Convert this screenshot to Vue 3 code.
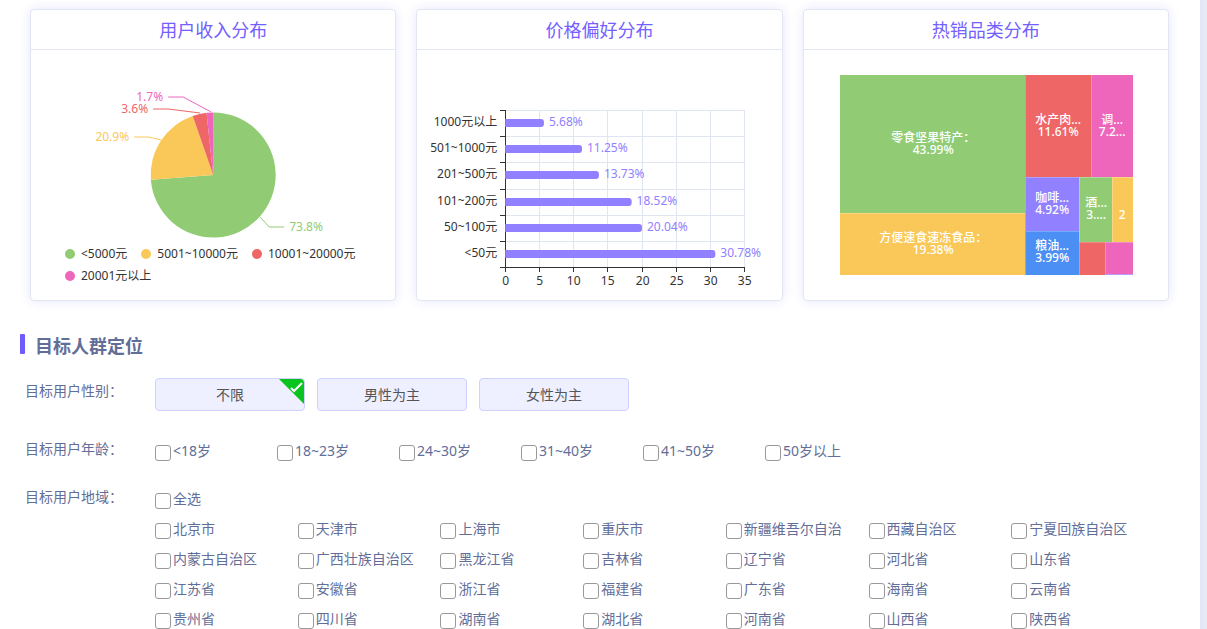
<script setup>
import { ref, computed } from 'vue'

// 用户收入分布
const incomeData = [
  { name: '<5000元', value: 73.8, color: '#91cc75', line: '229,167 238,177 253,177', x: 258, y: 181, anchor: 'start' },
  { name: '5001~10000元', value: 20.9, color: '#fac858', line: '103,87 118,87 130,90', x: 98, y: 91, anchor: 'end' },
  { name: '10001~20000元', value: 3.6, color: '#ee6666', line: '122,59 137,59 169,63', x: 117, y: 63, anchor: 'end' },
  { name: '20001元以上', value: 1.7, color: '#ee66bb', line: '137,47 152,47 180,62', x: 132, y: 51, anchor: 'end' }
]

const slices = computed(() => {
  const cx = 182
  const cy = 125
  const r = 62.5
  let start = 0
  return incomeData.map((item) => {
    const end = start + (item.value / 100) * Math.PI * 2
    const x1 = cx + r * Math.sin(start)
    const y1 = cy - r * Math.cos(start)
    const x2 = cx + r * Math.sin(end)
    const y2 = cy - r * Math.cos(end)
    const large = end - start > Math.PI ? 1 : 0
    start = end
    return {
      ...item,
      d: `M${cx},${cy} L${x1},${y1} A${r},${r} 0 ${large} 1 ${x2},${y2} Z`
    }
  })
})

// 价格偏好分布
const priceData = [
  { name: '1000元以上', value: '5.68' },
  { name: '501~1000元', value: '11.25' },
  { name: '201~500元', value: '13.73' },
  { name: '101~200元', value: '18.52' },
  { name: '50~100元', value: '20.04' },
  { name: '<50元', value: '30.78' }
]

const axis = { left: 88, top: 60, width: 239, height: 157, max: 35 }

const xTicks = [0, 5, 10, 15, 20, 25, 30, 35].map((value) => ({
  value,
  x: axis.left + Math.round((value / axis.max) * axis.width) + 0.5
}))

const yTicks = [0, 1, 2, 3, 4, 5, 6].map((i) => axis.top + Math.round((i * axis.height) / 6) + 0.5)

const bars = priceData.map((item, i) => {
  const y = axis.top + Math.round(((i + 0.5) * axis.height) / 6)
  const end = axis.left + (Number(item.value) / axis.max) * axis.width
  return {
    ...item,
    y,
    end,
    d: `M${axis.left},${y - 4} H${end - 3} q3,0 3,3 v2 q0,3 -3,3 H${axis.left} Z`
  }
})

// 热销品类分布
const categories = [
  { x: 36, y: 25, w: 185, h: 138, color: '#91cc75', name: '零食坚果特产：', value: '43.99%', tx: 129, ty: 92 },
  { x: 36, y: 163, w: 185, h: 62, color: '#fac858', name: '方便速食速冻食品：', value: '19.38%', tx: 129, ty: 192 },
  { x: 221, y: 25, w: 66, h: 102, color: '#ee6666', name: '水产肉...', value: '11.61%', tx: 254, ty: 74 },
  { x: 287, y: 25, w: 42, h: 102, color: '#ee66bb', name: '调...', value: '7.2...', tx: 308, ty: 74 },
  { x: 221, y: 127, w: 54, h: 54, color: '#9180ff', name: '咖啡...', value: '4.92%', tx: 248, ty: 152 },
  { x: 221, y: 181, w: 54, h: 44, color: '#4b8ff5', name: '粮油...', value: '3.99%', tx: 248, ty: 200 },
  { x: 275, y: 127, w: 33, h: 65, color: '#91cc75', name: '酒...', value: '3....', tx: 292, ty: 157 },
  { x: 308, y: 127, w: 21, h: 65, color: '#fac858', name: '', value: '2', tx: 318, ty: 157 },
  { x: 275, y: 192, w: 26, h: 33, color: '#ee6666' },
  { x: 301, y: 192, w: 28, h: 33, color: '#ee66bb' }
]

// 目标人群
const genders = ['不限', '男性为主', '女性为主']
const gender = ref('不限')

const ages = ['<18岁', '18~23岁', '24~30岁', '31~40岁', '41~50岁', '50岁以上']
const checkedAges = ref([])

const regions = [
  '北京市', '天津市', '上海市', '重庆市', '新疆维吾尔自治', '西藏自治区', '宁夏回族自治区',
  '内蒙古自治区', '广西壮族自治区', '黑龙江省', '吉林省', '辽宁省', '河北省', '山东省',
  '江苏省', '安徽省', '浙江省', '福建省', '广东省', '海南省', '云南省',
  '贵州省', '四川省', '湖南省', '湖北省', '河南省', '山西省', '陕西省'
]
const checkedRegions = ref([])

const allRegions = computed({
  get: () => checkedRegions.value.length === regions.length,
  set: (checked) => {
    checkedRegions.value = checked ? [...regions] : []
  }
})
</script>

<template>
  <div class="page">
    <main class="panel">
      <div class="cards">
        <section class="card">
          <h3 class="card-title">用户收入分布</h3>
          <svg class="chart pie" viewBox="0 0 364 193">
            <path v-for="slice in slices" :key="slice.name" :d="slice.d" :fill="slice.color" />
            <g v-for="slice in slices" :key="slice.value">
              <polyline :points="slice.line" :stroke="slice.color" fill="none" />
              <text :x="slice.x" :y="slice.y" :text-anchor="slice.anchor" :fill="slice.color">{{ slice.value }}%</text>
            </g>
          </svg>
          <ul class="legend">
            <li v-for="item in incomeData" :key="item.name" class="legend-item">
              <span class="dot" :style="{ backgroundColor: item.color }"></span>{{ item.name }}
            </li>
          </ul>
        </section>

        <section class="card">
          <h3 class="card-title">价格偏好分布</h3>
          <svg class="chart" viewBox="0 0 364 250">
            <g class="split-lines">
              <line v-for="tick in xTicks" :key="tick.value" :x1="tick.x" :x2="tick.x" y1="60" y2="217" />
              <line v-for="y in yTicks" :key="y" x1="88" x2="328" :y1="y" :y2="y" />
            </g>
            <g class="axis-lines">
              <line x1="88.5" x2="88.5" y1="60" y2="218" />
              <line x1="88" x2="328" y1="217.5" y2="217.5" />
              <line v-for="tick in xTicks" :key="tick.value" :x1="tick.x" :x2="tick.x" y1="217" y2="222" />
              <line v-for="y in yTicks" :key="y" x1="83" x2="88" :y1="y" :y2="y" />
            </g>
            <g class="axis-labels">
              <text v-for="tick in xTicks" :key="tick.value" :x="tick.x" y="235" text-anchor="middle">{{ tick.value }}</text>
              <text v-for="bar in bars" :key="bar.name" x="80" :y="bar.y + 3" text-anchor="end">{{ bar.name }}</text>
            </g>
            <g class="bars">
              <path v-for="bar in bars" :key="bar.name" :d="bar.d" />
              <text v-for="bar in bars" :key="bar.value" :x="bar.end + 5" :y="bar.y + 3">{{ bar.value }}%</text>
            </g>
          </svg>
        </section>

        <section class="card">
          <h3 class="card-title">热销品类分布</h3>
          <svg class="chart treemap" viewBox="0 0 364 250">
            <g v-for="(item, i) in categories" :key="i">
              <rect :x="item.x" :y="item.y" :width="item.w" :height="item.h" :fill="item.color" />
              <text v-if="item.name" :x="item.tx" :y="item.ty" text-anchor="middle">{{ item.name }}</text>
              <text v-if="item.value" :x="item.tx" :y="item.ty + 12" text-anchor="middle">{{ item.value }}</text>
            </g>
            <path class="dividers" d="M36,163 H221 M221,25 V225 M287,25 V127 M221,127 H329 M221,181 H275 M275,127 V225 M308,127 V192 M275,192 H329 M301,192 V225" />
            <rect x="301" y="224" width="28" height="1" fill="#b79cf5" />
          </svg>
        </section>
      </div>

      <h2 class="section-title">目标人群定位</h2>

      <div class="form">
        <div class="form-row">
          <span id="gender-label" class="form-label">目标用户性别：</span>
          <div class="genders" role="group" aria-labelledby="gender-label">
            <button
              v-for="item in genders"
              :key="item"
              type="button"
              class="gender-btn"
              :aria-pressed="gender === item"
              @click="gender = item"
            >
              {{ item }}
              <svg v-if="gender === item" class="corner" viewBox="0 0 25 25">
                <path d="M0,0 H21 Q25,0 25,4 V25 Z" fill="#09c41d" />
                <path d="M12,9 L15,12 L23,4" fill="none" stroke="#fff" stroke-width="2" />
              </svg>
            </button>
          </div>
        </div>

        <div class="form-row">
          <span id="age-label" class="form-label">目标用户年龄：</span>
          <div class="ages" role="group" aria-labelledby="age-label">
            <label v-for="item in ages" :key="item" class="check">
              <input v-model="checkedAges" type="checkbox" :value="item">
              <span>{{ item }}</span>
            </label>
          </div>
        </div>

        <div class="form-row">
          <span id="region-label" class="form-label">目标用户地域：</span>
          <div class="region-box" role="group" aria-labelledby="region-label">
            <label class="check">
              <input v-model="allRegions" type="checkbox">
              <span>全选</span>
            </label>
            <div class="regions">
              <label v-for="item in regions" :key="item" class="check">
                <input v-model="checkedRegions" type="checkbox" :value="item">
                <span>{{ item }}</span>
              </label>
            </div>
          </div>
        </div>
      </div>
    </main>
  </div>
</template>

<style>
body {
  margin: 0;
  background-color: #e6eaf2;
}
</style>

<style scoped>
.page {
  box-sizing: border-box;
  height: 100vh;
  padding-right: 5px;
  overflow-y: auto;
  scrollbar-width: none;
  font-family: "Noto Sans", "Noto Sans CJK SC", sans-serif;
  font-size: 14px;
  color: #626e98;
}

.panel {
  box-sizing: border-box;
  min-height: 100%;
  padding-top: 9px;
  border-right: 2px solid #e4e4fa;
  background-color: #fff;
}

.cards {
  display: grid;
  grid-template-columns: repeat(3, 1fr);
  gap: 20px;
  padding: 0 31px 0 30px;
}

.card {
  border: 1px solid #e2e6f3;
  border-radius: 4px;
  box-shadow: 0 0 12px #e6e6ff;
  background-color: #fff;
}

.card-title {
  margin: 0;
  padding-top: 2px;
  border-bottom: 1px solid #e2e6f0;
  font-size: 18px;
  font-weight: 400;
  line-height: 37px;
  text-align: center;
  color: #7460ff;
}

.chart {
  display: block;
  width: 100%;
  height: 250px;
  font-size: 12px;
}

.chart.pie {
  height: 193px;
}

.legend {
  display: flex;
  flex-wrap: wrap;
  gap: 0 14px;
  height: 57px;
  margin: 0;
  padding: 0 0 0 34px;
  list-style: none;
  font-size: 12px;
  line-height: 22px;
  box-sizing: border-box;
  align-content: flex-start;
  color: #333;
}

.legend-item {
  display: flex;
  align-items: center;
  gap: 6px;
}

.dot {
  width: 10px;
  height: 10px;
  border-radius: 50%;
}

.split-lines {
  stroke: #e0e6f1;
  shape-rendering: crispEdges;
}

.axis-lines {
  stroke: #333;
  shape-rendering: crispEdges;
}

.axis-labels {
  fill: #333;
}

.bars {
  fill: #9180ff;
}

.treemap rect {
  shape-rendering: crispEdges;
}

.treemap text {
  fill: #fff;
  font-weight: 500;
}

.dividers {
  fill: none;
  stroke: #fff;
  stroke-opacity: 0.25;
  shape-rendering: crispEdges;
}

.section-title {
  display: flex;
  gap: 10px;
  margin: 33px 20px 20px;
  font-size: 18px;
  font-weight: 700;
  line-height: 24px;
}

.section-title::before {
  content: "";
  width: 5px;
  height: 20px;
  border-radius: 1px;
  background-color: #6f5cff;
}

.form {
  display: flex;
  flex-direction: column;
  gap: 18px;
  padding: 0 46px 0 25px;
}

.form-row {
  display: flex;
}

.form-label {
  flex: none;
  width: 130px;
  line-height: 26px;
}

.genders {
  display: flex;
  gap: 12px;
  min-height: 40px;
  align-items: flex-start;
}

.gender-btn {
  position: relative;
  width: 150px;
  height: 33px;
  padding: 0 0 2px;
  border: 1px solid #cfd2ff;
  border-radius: 4px;
  background-color: #eeefff;
  font: inherit;
  color: #555;
  cursor: pointer;
}

.corner {
  position: absolute;
  top: 0;
  right: 0;
  width: 25px;
  height: 25px;
}

.ages {
  display: flex;
  flex-wrap: wrap;
}

.ages .check {
  width: 122px;
}

.region-box {
  flex: 1;
}

.regions {
  display: grid;
  grid-template-columns: repeat(7, 1fr);
}

.check {
  display: flex;
  align-items: center;
  gap: 2px;
  height: 28px;
  padding-bottom: 2px;
  white-space: nowrap;
}

.check input {
  appearance: none;
  flex: none;
  box-sizing: border-box;
  width: 16px;
  height: 16px;
  margin: 6px 0 0;
  border: 1px solid #999;
  border-radius: 3px;
  background-color: #fff;
}

.check input:checked {
  border-color: #6f5cff;
  background-color: #6f5cff;
}
</style>
